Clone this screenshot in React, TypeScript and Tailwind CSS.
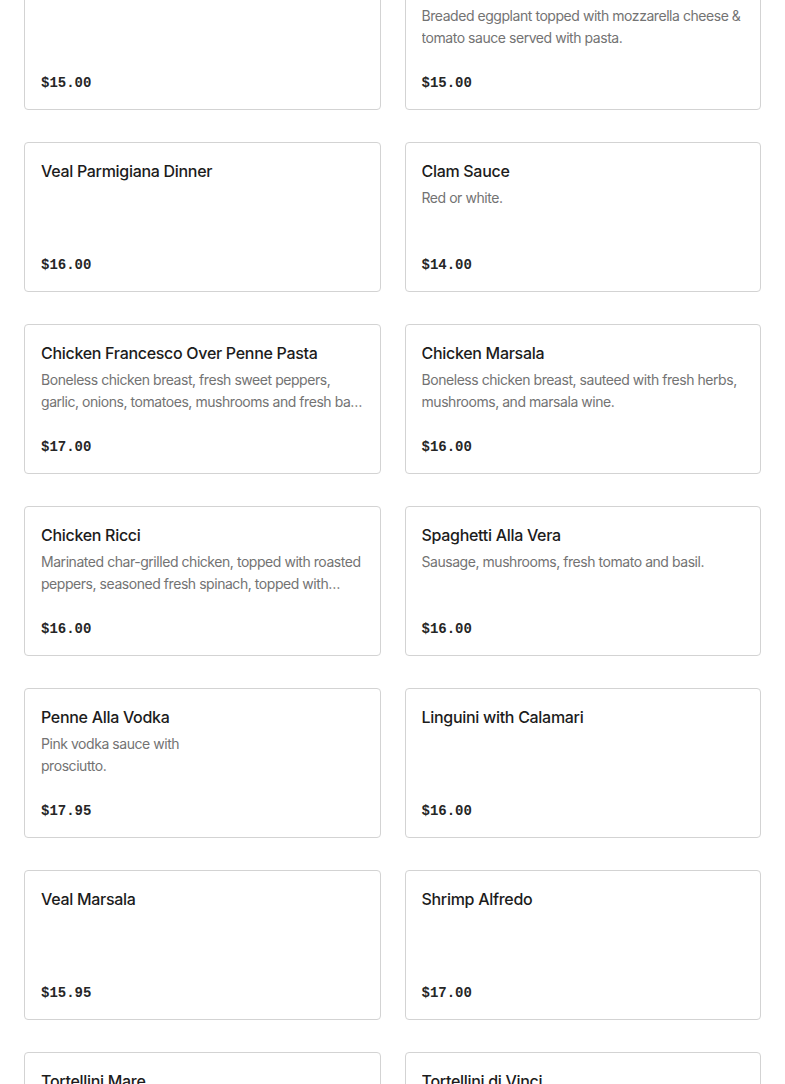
import React from "react";

type Item = {
  name: string;
  description?: React.ReactNode;
  price: string;
};

const items: Item[] = [
  { name: "Chicken Parmigiana Dinner", price: "$15.00" },
  {
    name: "Eggplant Parmigiana",
    description: "Breaded eggplant topped with mozzarella cheese & tomato sauce served with pasta.",
    price: "$15.00",
  },
  { name: "Veal Parmigiana Dinner", price: "$16.00" },
  { name: "Clam Sauce", description: "Red or white.", price: "$14.00" },
  {
    name: "Chicken Francesco Over Penne Pasta",
    description:
      "Boneless chicken breast, fresh sweet peppers, garlic, onions, tomatoes, mushrooms and fresh basil in a light wine sauce.",
    price: "$17.00",
  },
  {
    name: "Chicken Marsala",
    description: "Boneless chicken breast, sauteed with fresh herbs, mushrooms, and marsala wine.",
    price: "$16.00",
  },
  {
    name: "Chicken Ricci",
    description:
      "Marinated char-grilled chicken, topped with roasted peppers, seasoned fresh spinach, topped with mozzarella cheese.",
    price: "$16.00",
  },
  {
    name: "Spaghetti Alla Vera",
    description: "Sausage, mushrooms, fresh tomato and basil.",
    price: "$16.00",
  },
  {
    name: "Penne Alla Vodka",
    description: (
      <>
        Pink vodka sauce with
        <br />
        prosciutto.
      </>
    ),
    price: "$17.95",
  },
  { name: "Linguini with Calamari", price: "$16.00" },
  { name: "Veal Marsala", price: "$15.95" },
  { name: "Shrimp Alfredo", price: "$17.00" },
  { name: "Tortellini Mare", price: "$17.00" },
  { name: "Tortellini di Vinci", price: "$17.00" },
];

function MenuCard({ item }: { item: Item }) {
  return (
    <div className="h-[150px] rounded-[4px] border border-[#d3d3d3] bg-white px-4 pt-4 pb-4 flex flex-col">
      <h3 className="text-[16px] leading-6 font-medium tracking-[-0.3px] text-[#1c1c1c] truncate">{item.name}</h3>
      {item.description && (
        <p className="mt-1 text-[14px] leading-[22px] tracking-[-0.45px] text-[#737373] line-clamp-2">
          {item.description}
        </p>
      )}
      <div className="mt-auto text-[14px] leading-5 font-bold text-[#262626] font-['Liberation_Mono',monospace]">
        {item.price}
      </div>
    </div>
  );
}

export default function App() {
  return (
    <div className="min-h-screen w-full bg-white overflow-hidden font-['Inter',sans-serif]">
      <div className="px-6 -mt-[40px] grid grid-cols-2 gap-x-6 gap-y-8">
        {items.map((item) => (
          <MenuCard key={item.name} item={item} />
        ))}
      </div>
    </div>
  );
}
